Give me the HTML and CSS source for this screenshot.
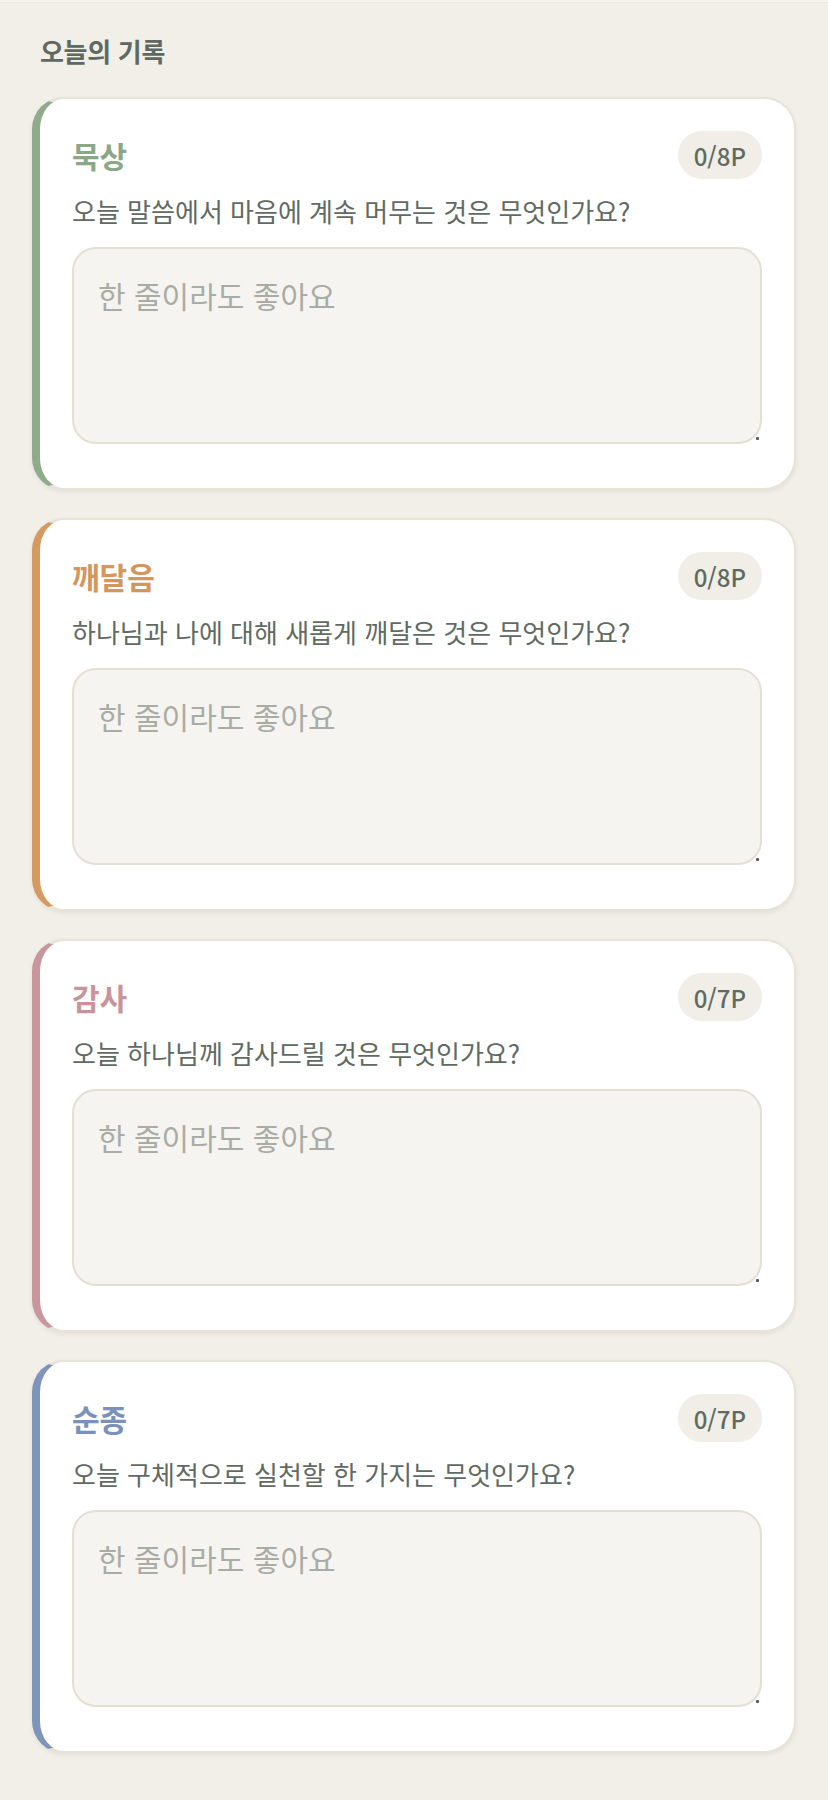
FILE: index.html
```html
<!DOCTYPE html>
<html lang="ko">
<head>
<meta charset="utf-8">
<title>오늘의 기록</title>
<link rel="stylesheet" href="styles.css">
</head>
<body>
<div class="topline"></div>
<main class="page">
  <h2 class="section-title">오늘의 기록</h2>

  <section class="card card-green">
    <div class="card-head">
      <h3 class="card-title">묵상</h3>
      <span class="badge">0/8P</span>
    </div>
    <p class="question">오늘 말씀에서 마음에 계속 머무는 것은 무엇인가요?</p>
    <div class="answer-wrap">
      <textarea class="answer" placeholder="한 줄이라도 좋아요"></textarea>
    </div>
  </section>

  <section class="card card-orange">
    <div class="card-head">
      <h3 class="card-title">깨달음</h3>
      <span class="badge">0/8P</span>
    </div>
    <p class="question">하나님과 나에 대해 새롭게 깨달은 것은 무엇인가요?</p>
    <div class="answer-wrap">
      <textarea class="answer" placeholder="한 줄이라도 좋아요"></textarea>
    </div>
  </section>

  <section class="card card-pink">
    <div class="card-head">
      <h3 class="card-title">감사</h3>
      <span class="badge">0/7P</span>
    </div>
    <p class="question">오늘 하나님께 감사드릴 것은 무엇인가요?</p>
    <div class="answer-wrap">
      <textarea class="answer" placeholder="한 줄이라도 좋아요"></textarea>
    </div>
  </section>

  <section class="card card-blue">
    <div class="card-head">
      <h3 class="card-title">순종</h3>
      <span class="badge">0/7P</span>
    </div>
    <p class="question">오늘 구체적으로 실천할 한 가지는 무엇인가요?</p>
    <div class="answer-wrap">
      <textarea class="answer" placeholder="한 줄이라도 좋아요"></textarea>
    </div>
  </section>
</main>
</body>
</html>
```

FILE: styles.css
```css
* { box-sizing: border-box; }

html, body {
  margin: 0;
  padding: 0;
  background: #f2efe9;
}

body {
  font-family: "Noto Sans CJK KR", "Noto Sans", sans-serif;
  color: #5f6b62;
}

.topline {
  height: 3px;
  background: #f6f4f0;
  border-bottom: 1px solid #ece8e0;
}

.page {
  padding: 0 32px 46px 32px;
  display: flex;
  flex-direction: column;
  gap: 28px;
}

.section-title {
  margin: 0;
  padding: 30px 0 0 8px;
  height: 66px;
  font-size: 26px;
  line-height: 36px;
  font-weight: 700;
  color: #5e6a61;
  letter-spacing: -0.3px;
}

.card {
  background: #ffffff;
  border: 2px solid #e8e3d9;
  border-left: 8px solid #8fab8c;
  border-radius: 32px;
  padding: 32px 32px 44px 32px;
  box-shadow: 0 2px 4px rgba(120, 110, 90, 0.12);
}

.card-green { border-left-color: #8fab8c; }
.card-orange { border-left-color: #d6995f; }
.card-pink { border-left-color: #c9969b; }
.card-blue { border-left-color: #7d95bb; }

.card-head {
  display: flex;
  align-items: center;
  justify-content: space-between;
  height: 48px;
  margin-bottom: 14px;
}

.card-title {
  margin: 0;
  font-size: 30px;
  line-height: 40px;
  font-weight: 700;
}

.card-green .card-title { color: #8aa888; }
.card-orange .card-title { color: #d4965c; }
.card-pink .card-title { color: #c8939a; }
.card-blue .card-title { color: #7a92b9; }

.badge {
  display: inline-flex;
  align-items: center;
  justify-content: center;
  height: 48px;
  padding: 0 16px;
  border-radius: 24px;
  background: #f1eee7;
  color: #5f6b62;
  font-family: "Noto Sans CJK KR", "Noto Sans", sans-serif;
  font-size: 24px;
  font-weight: 500;
}

.question {
  margin: 0 0 18px 0;
  font-size: 26px;
  line-height: 36px;
  color: #5f6b62;
}

.answer-wrap {
  position: relative;
}

.answer-wrap::after {
  content: "";
  position: absolute;
  right: 3px;
  bottom: 4px;
  width: 3px;
  height: 3px;
  border-radius: 1px;
  background: #555a57;
}

.answer {
  display: block;
  width: 100%;
  height: 197px;
  margin: 0;
  padding: 24px 24px;
  border: 2px solid #e4dfd3;
  border-radius: 24px;
  background: #f6f4f0;
  font-family: "Noto Sans CJK KR", "Noto Sans", sans-serif;
  font-size: 30px;
  line-height: 44px;
  color: #5f6b62;
  resize: none;
  outline: none;
}

.answer::placeholder {
  color: #a9aca5;
}
```
